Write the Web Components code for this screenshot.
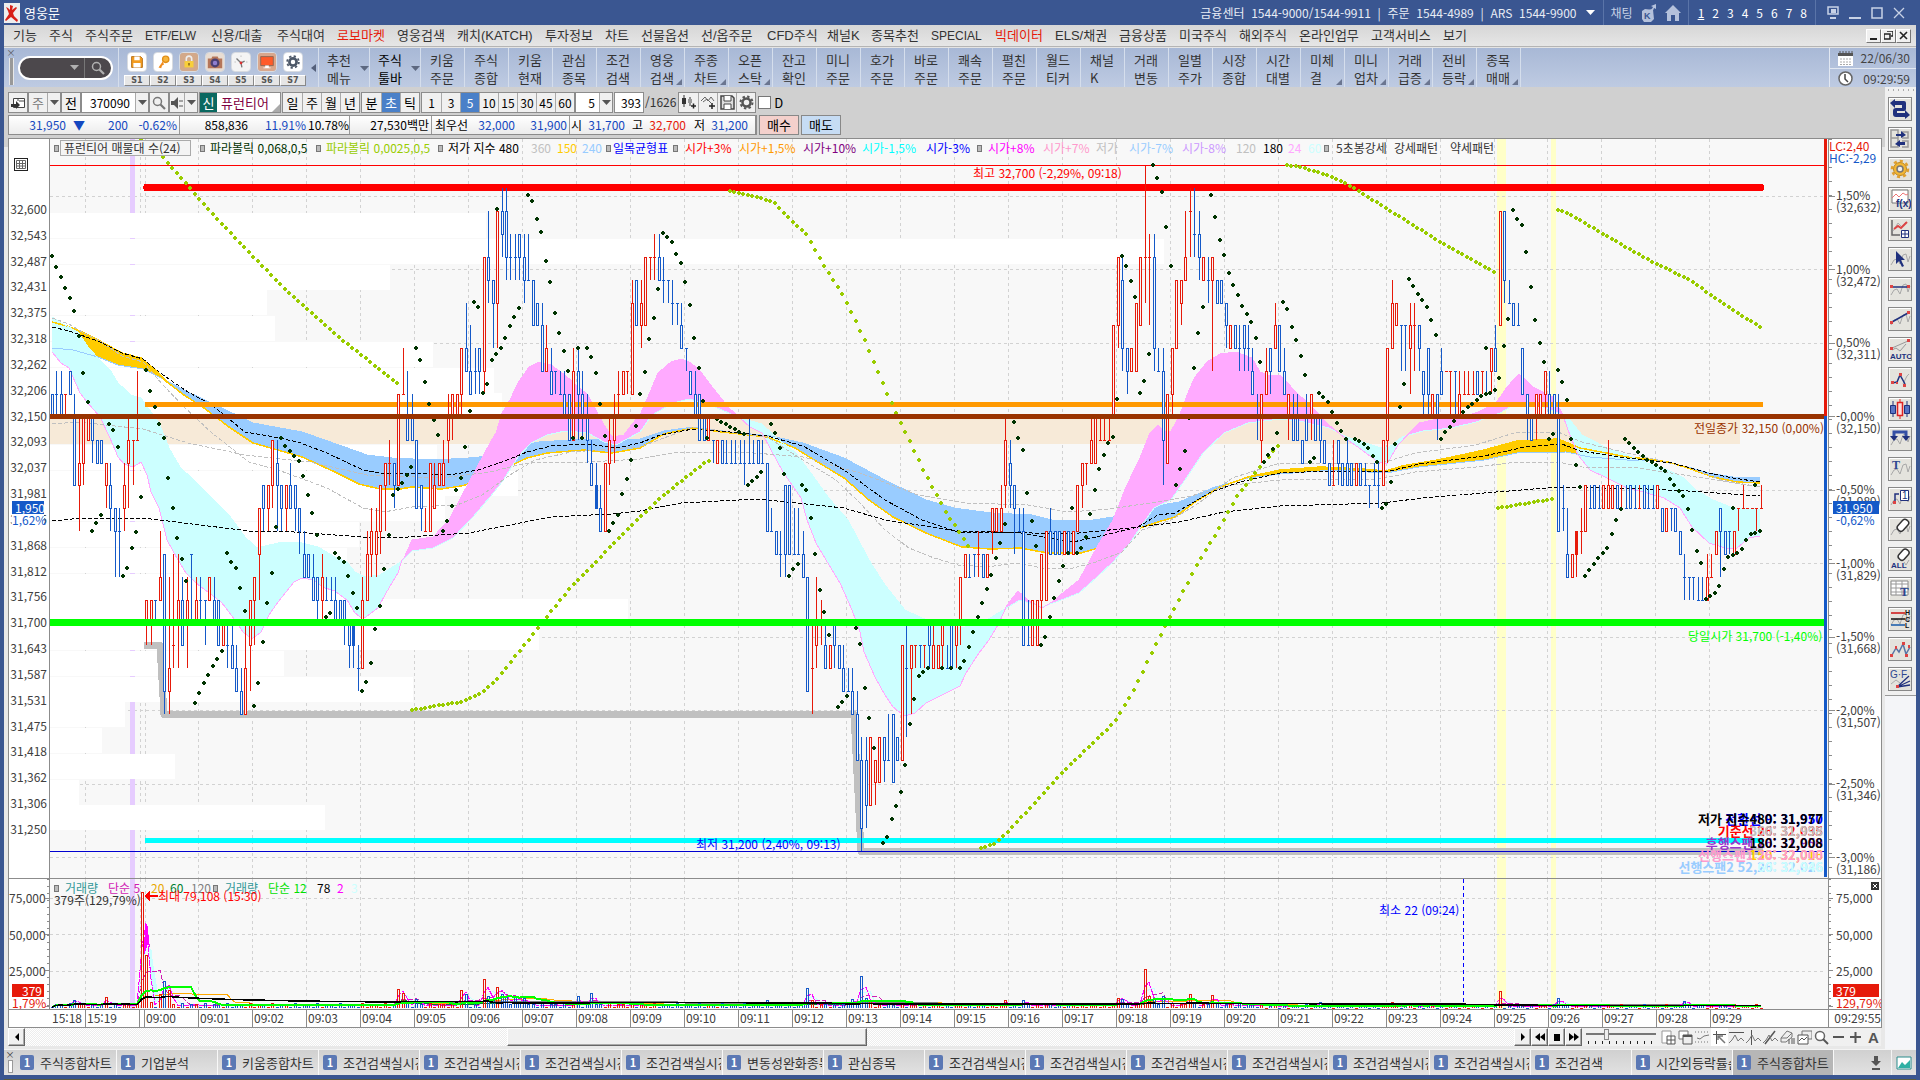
<!DOCTYPE html>
<html lang="ko">
<head>
<meta charset="utf-8">
<title>영웅문</title>
<style>
  html, body {
    margin: 0;
    height: 100%;
  }
  body {
    --frame: #3a5691;
    --up: #e61a0a;
    --down: #1459c8;
    --face: #f0f0f0;
    --edge: #8c8c8c;
    font: 13px/16px "Noto Sans CJK KR", sans-serif;
    color: #333;
    overflow: hidden;
  }
</style>
</head>
<body>
<trading-app></trading-app>

<script>
const BASE = `
  * { box-sizing: border-box; }
  :host { display: block; box-sizing: border-box; }
  button, input, select { font: inherit; color: inherit; margin: 0; padding: 0; border: 0; background: none; border-radius: 0; }
  select { appearance: none; }
  a { color: inherit; text-decoration: none; }
  svg { display: block; }
`;

class UiElement extends HTMLElement {
  constructor() {
    super();
    this.attachShadow({ mode: 'open' });
  }

  connectedCallback() {
    this.shadowRoot.innerHTML = `<style>${BASE}${this.styles()}</style>${this.render()}`;
  }

  styles() { return ''; }
  render() { return '<slot></slot>'; }
}

/* ---------- icons ---------- */

const svg = (w, h, body) => `<svg width="${w}" height="${h}" viewBox="0 0 ${w} ${h}" aria-hidden="true">${body}</svg>`;
const CARET = svg(9, 5, '<path d="M0 0h9L4.500 5z" fill="currentColor"/>');
const LENS = svg(14, 14, '<circle cx="5.500" cy="5.500" r="4" fill="none" stroke="currentColor" stroke-width="1.500"/><path d="M8.500 8.500l4.500 4.500" stroke="currentColor" stroke-width="2.200"/>');
const WAVE = '<path d="M2 17l3-5 3-1 3 5 3-9 3-1 2 8 2-6" fill="none" stroke="#a8a8a8"/>';

const RAIL_ICONS = [
  ['종목 연동', '<path d="M1 5l5-4v2h9q2 0 2 2v6q0 2-2 2H8v2h8v-3l5 5-5 4v-2H7q-3 0-3-3v-3q0-3 3-3h6V7H6v3z" fill="#20317d"/>'],
  ['화면 분할', '<path d="M2 2h7v17H2zM2 10h7M13 4h6v6h-6M13 13h6v6h-6" fill="none" stroke="#999" stroke-width="1.500"/><path d="M7 6h5V3l5 4-5 3V8H7zM16 14h-5v-2l-5 4 5 3v-2h5z" fill="#20317d"/>'],
  ['환경설정', '<circle cx="11" cy="11" r="6.500" fill="#f3b735" stroke="#b98722"/><circle cx="11" cy="11" r="8" fill="none" stroke="#e0a030" stroke-width="2.500" stroke-dasharray="3.100 3.100"/><circle cx="11" cy="11" r="3" fill="#eee" stroke="#777" stroke-width="1.500"/>'],
  ['수식관리자', '<path d="M3 2h16v13H3z" fill="#fff" stroke="#777"/><path d="M3 10l4-4 3 3 4-4 3 2 2-1" fill="none" stroke="#e77"/><text x="7" y="19" font-size="10" font-weight="bold" font-family="Liberation Sans" fill="#20317d">f(x)</text>'],
  ['지표추가', '<path d="M3 2v15h8" fill="none" stroke="#666" stroke-width="1.500"/><path d="M4 13l5-8 4 4 4-5" fill="none" stroke="#aaa"/><path d="M5 11l4-3 3 2 6-6" fill="none" stroke="#d44" stroke-width="2"/><path d="M12.500 12.500h7v7h-7zM16 12.500v7M12.500 16h7" fill="#fff" stroke="#20317d"/>'],
  ['선택', WAVE + '<path d="M7 3v13l3-3 3 6 2-1-3-6h4z" fill="#20317d"/>'],
  ['수평선', WAVE + '<path d="M2 9h18" stroke="#20317d" stroke-width="1.500"/><path d="M1 7h3v3H1zM18 7h3v3h-3z" fill="#d44"/>'],
  ['추세선', WAVE + '<path d="M3 14L19 5" stroke="#20317d" stroke-width="1.500"/><path d="M1 13h3v3H1zM18 3h3v3h-3z" fill="#d44"/>'],
  ['자동추세선', '<path d="M3 10L19 3M3 12l4-2 4 3 6-7" fill="none" stroke="#999"/><path d="M1 9h3v3H1zM18 1h3v3h-3z" fill="#d44"/><text x="1" y="21" font-size="8" font-weight="bold" font-family="Liberation Sans" fill="#20317d">AUTO</text>'],
  ['파동선', '<path d="M14 16l4-8 2-2" fill="none" stroke="#a8a8a8"/><path d="M3 15l5-1 3-7 5 9" fill="none" stroke="#20317d" stroke-width="1.500"/><path d="M2 13h3v3H2zM7 14h2v2H7zM10 5h3v3h-3zM14 16h3v3h-3z" fill="#d44"/>'],
  ['봉 표시', '<path d="M4 3v16M18 3v16" stroke="#20317d"/><path d="M1.500 7.500h5v8h-5zM15.500 7.500h5v8h-5z" fill="#5874c4" stroke="#20317d"/><path d="M11 1v20" stroke="#d22"/><path d="M8.500 4.500h5v13h-5z" fill="#fdd" stroke="#d22" stroke-width="1.500"/>'],
  ['되돌리기', WAVE + '<path d="M5 9V4h12v5" fill="none" stroke="#3550a5" stroke-width="3"/><path d="M1 8h8l-4 5zM13 8h8l-4 5z" fill="#20317d"/>'],
  ['텍스트', WAVE + '<text x="3" y="11" font-size="12" font-weight="bold" font-family="Liberation Serif" fill="#2c4790">T</text>'],
  ['번호', WAVE + '<path d="M6 15V6h4" fill="none" stroke="#20317d" stroke-width="1.500"/><path d="M11.500 2.500h8v10h-8z" fill="#fff" stroke="#20317d"/><text x="13" y="11" font-size="10" font-family="Liberation Sans" fill="#20317d">1</text><path d="M4 13h3v3H4z" fill="#d44"/>'],
  ['지우기', WAVE + '<rect x="8" y="4" width="13" height="7" rx="3" transform="rotate(-48 14 8)" fill="#fff" stroke="#333" stroke-width="1.500"/>'],
  ['모두 지우기', '<rect x="9" y="3" width="12" height="7" rx="3" transform="rotate(-48 15 7)" fill="#fff" stroke="#333" stroke-width="1.500"/><path d="M15 14l2 3 3-5" fill="none" stroke="#a8a8a8"/><text x="2" y="20" font-size="8" font-weight="bold" font-family="Liberation Sans" fill="#20317d">ALL</text>'],
  ['데이터표', '<path d="M2 3h17v14H2z" fill="#fff" stroke="#888"/><path d="M2 6h17M2 10h17M2 14h17M7 3v14M13 3v14" stroke="#999"/><text x="11" y="18" font-size="13" font-weight="bold" font-family="Liberation Serif" fill="#2c4790">T</text>'],
  ['고저종 표시', WAVE + '<path d="M2 5h14" stroke="#c11" stroke-width="1.500"/><path d="M2 11h14" stroke="#111" stroke-width="1.500"/><path d="M2 17h14" stroke="#1459a8" stroke-width="1.500"/><g font-size="7" font-weight="bold" font-family="Liberation Sans" fill="#111"><text x="16" y="7">H</text><text x="16" y="14">C</text><text x="16" y="20">L</text></g>'],
  ['지그재그', '<path d="M3 17l4-7 3 4 4-8 3 10 4-7" fill="none" stroke="#5874a4" stroke-width="1.500"/><path d="M1 16h3v3H1zM6 8h2v3H6zM13 4h3v3h-3zM16 16h3v3h-3zM19 7h2v3h-2z" fill="#d44"/>'],
  ['갠·피보나치', '<path d="M2 16l5-4 4 3" fill="none" stroke="#aaa"/><path d="M8 19L20 8M8 19l13-6M8 19l13-2" stroke="#20317d" stroke-width="1.300"/><path d="M7 17h3v3H7z" fill="#d44"/><text x="1" y="10" font-size="10" font-family="Liberation Sans" fill="#2c4790">G·F</text>']
];

const SHORTCUTS = [
  ['저장', '#fff', '<path d="M4 4h10l2 2v10H4z" fill="#f39c1f" stroke="#b36b12"/><path d="M7 4h6v4H7zM6 11h8v5H6z" fill="#fff"/>'],
  ['열쇠', '#fff', '<circle cx="13" cy="7" r="3.500" fill="#f6b53c" stroke="#e18f18" stroke-width="1.500"/><path d="M10 9l-5 7 3 1 1-3 2-1z" fill="#f08c1e"/>'],
  ['잠금', '#d3a98a', '<path d="M7 9V6.500a3 3 0 016 0V9" fill="none" stroke="#eee" stroke-width="1.800"/><rect x="5" y="9" width="10" height="7" fill="#f8cf3a"/><path d="M10 11v3" stroke="#7a5a10" stroke-width="1.500"/>'],
  ['화면캡처', '#e9ddd2', '<path d="M2 6h4l1-2h6l1 2h4v11H2z" fill="#b5765a"/><circle cx="10" cy="11" r="5" fill="#4a4072"/><circle cx="10" cy="11" r="2.500" fill="#8f7fd0"/>'],
  ['시계', '#f4f4f4', '<path d="M5 6l5 5 4-2M10 11l1 5" fill="none" stroke="#777" stroke-width="1.500"/><circle cx="10" cy="11" r="1.500" fill="#d33"/><path d="M10 3v1M3 10h1M16 10h1" stroke="#999"/>'],
  ['모니터', '#d9a78c', '<path d="M3 4h14v10H3z" fill="#ff5a28" stroke="#865"/><path d="M8 14h4v2H8zM6 16h8v1H6z" fill="#fff"/>'],
  ['설정', '#fff', '<circle cx="10" cy="10" r="4" fill="none" stroke="#4d5868" stroke-width="3"/><circle cx="10" cy="10" r="6.500" fill="none" stroke="#4d5868" stroke-width="2" stroke-dasharray="2.500 2.600"/>']
];

/* ---------- chart data ---------- */

// One token per 5-second bar: colour, then high, low, body top and body bottom.
// Levels are base 36 steps of 50 won above 31,200.
const BARS = `
bkjkj bljkk bljkj rkjkk blklk bkgjg rjehg rjgjh rjiji bjhji bihih bihih rhfhg bhegf bfcfe bfcee rhegf rjfih rigii rliii
r.... rb9ba rb9ba bbabb rebcb bd6d7 rc687 rd899 rd8ba bc9b9 rc8ba bdadd rcaba bcabb bb9bb rcbcb bcaba bb9b9 ra9a9 ba899
ba898 b9787 b8676 ra686 rb7b9 rc9cb rfbfd bgegf rgegf rifig biehg bgegf rgegf bhfgf bgegf bfdfe becdc bdcdc bdbcb bcacb
rdacb bcbbb bcbbb bcaba bbaba bb9ba ba8a9 b98a9 b9788 rc8b8 rebdb rfced rfced rgdge rhehg righh bhfhg rkgkg rmkkk bliji
bkiji bifif bgegf rfeee rhehe rhfgf rhghg righg rkhji rkikj rkjkj rmjmk bolml bnklk bmkll bmkml rqkql bsoqp bpmpo rsmso
btqsr btpsq brpqq brpqq brprq broqp brppp bpnpn bonon bolnl rnlml bmklk blkll blkkk bljkj bkiki rmili bmilk blikj bkhji
bighg bhgfg bgefe rhehe rjgih rkhji rljkk rlklk rlkll rpkok bpnpn rpmon rqnqn rqpqq rrpqq brpqp bqopp bpopp bpnoo bonoo
bomnm bmlmm blklk bljkj bkiki bjiji rjiji bihii rihih bihih bihhh bihhh bihhh bihhh bighh bjhhh bihhh bihih bihhh bhehe
bfeee beded becdd bgcgd bgdgd bfddd bfddd becdc bc7c7 ra688 rc8a9 rb9aa ba898 r9898 ba8a9 b9898 b9787 b8777 b8676 b7464
b5041 b5142 r5252 r4243 r5353 b5354 b6444 b6363 b5454 r9494 ba588 r9698 r9899 b9899 r9899 ba8a9 ra898 r9898 ra8a9 b9888
ba8a8 ra8a9 rc9ca rdcdc bdccc bdcdd recdd bdcdc rdcdc rfdfe rfefe rgefe rjfig bifhg bgdgf bfeee bf9e9 bb999 rb9b9 rb9b9
rdadb rebeb bfded beded beded reded beded reded rgege rhfhg rhghh rjhih rjhjh rjiii rjiii rjiii rnjnj rqmqn bqlpm bmkml
rmlml rolol rqnqn ruoqq rrnqq brlqm bmlll bmgli rkhkh rmjmk rpmpm rpnpo rspqp rtqss btqrr bsprq rqpqp bqopp rqlqp bpopo
bpopo bomon rnmnm bnmnm bnlmm bnlnm bnlmm bmklk bkijj rkhki rmklk bmkml romnm bnlnl bmklk rkikj bkiji bkiji bihih bkiji
rkikj bjiji bjhji bihih bhghg riggg bigih bhghg bighg bhghg rhghg bhghg bhggg bgfgg bhggg bhfgg rigig rmhmi rpmom ronon
bnlnn bnlnn roknm rolnn bnlnm bljlk bmjmk rkjkj bkikj bmklk rllll rljll bljll rljkj rlkkk rlkkk rlkkk blklk rlkll blkkk
rmkml bnlml rsnsn bsosp bpooo bonon bonnn bmkmk bkikj bjiji rkikj rkjkj rljlk bljkj bkjkj bkeje bgeff bfcdc rdcdc recde
rfdee rgege bgfff bgfgf bgfff rgfgf rifgf rgfgf bgfgf rgfff bgfff bgfgf bgfff rgfff bgfgf bgfff bgfff rgfgf bfefe rfefe
bfeff bfefe beded bdbcc bcbcc bcbcc bcbbb bcbbb rdbcb rdccc reded bfcfe beded bedee reded rfeff rgfff rffff rffff rfeff
rgfff`.trim().split(/\s+/);

const BAR_STEP = 4.497;
const barX = i => Math.round(51.8 + i * BAR_STEP);
const levelY = level => Math.round(851 - level * 22.85);

const SPAN_A = '52,352 61,363 69,368 80,393 87,402 100,417 110,438 118,457 124,464 133,467 141,462 147,475 151,492 159,508 167,540 178,560 186,573 196,583 212,595 222,603 235,620 243,632 252,639 261,632 269,615 278,602 294,582 302,578 314,580 322,587 335,591 347,600 355,613 363,619 378,608 386,593 398,573 402,560 404,558 412,540 433,537 449,520 469,482 490,443 496,433 502,413 510,400 518,383 529,367 539,362 551,365 565,375 576,385 588,395 596,410 604,425 612,437 624,435 633,423 640,415 648,397 658,373 671,362 681,359 691,363 701,372 713,388 728,407 740,418 750,427 762,433 771,450 783,472 801,498 807,520 816,543 826,560 840,583 852,610 860,632 864,652 875,677 885,695 893,707 905,716 915,713 926,703 942,695 960,686 966,673 979,653 989,640 999,623 1007,605 1018,591 1028,600 1042,608 1052,602 1064,592 1079,580 1089,562 1097,547 1113,520 1126,487 1140,458 1150,433 1158,425 1164,431 1171,431 1179,417 1189,390 1195,377 1207,362 1220,354 1236,352 1252,358 1260,372 1271,376 1280,375 1296,392 1313,408 1329,425 1345,438 1362,450 1378,462 1387,464 1398,445 1419,423 1443,418 1464,417 1478,412 1496,403 1507,387 1519,374 1533,387 1553,397 1562,413 1568,430 1578,455 1590,470 1607,478 1627,488 1647,493 1664,498 1680,508 1692,527 1709,543 1725,548 1737,548 1749,538 1760,536';
const SPAN_B = '52,317 61,323 78,332 88,347 98,358 110,370 118,383 131,395 141,398 151,412 159,423 169,448 180,467 204,490 229,515 245,537 257,548 278,543 298,542 318,547 335,557 347,562 355,572 365,577 380,575 402,561 412,551 433,548 453,538 473,517 490,497 502,482 518,457 531,443 547,435 565,431 588,433 604,442 616,445 640,432 652,415 673,403 689,399 705,403 722,410 740,418 762,424 779,440 795,452 811,473 828,497 848,520 869,560 885,585 905,610 922,618 934,623 962,628 987,620 1003,610 1020,600 1042,607 1056,602 1079,593 1097,577 1113,562 1130,543 1142,525 1154,508 1171,500 1187,477 1203,453 1224,433 1248,423 1280,419 1304,422 1329,428 1347,437 1378,447 1388,448 1402,437 1423,431 1451,428 1476,422 1500,413 1517,403 1535,404 1558,413 1570,420 1582,435 1607,448 1627,455 1647,463 1668,470 1684,478 1696,490 1713,500 1733,508 1760,510';
const LOW_150 = '52,322 67,326 82,332 98,340 122,353 141,358 155,370 167,382 184,395 204,408 229,427 253,443 278,450 302,457 335,472 359,484 380,489 400,489 412,487 441,489 461,486 486,479 506,468 527,458 547,453 584,450 612,453 640,448 664,434 693,428 722,432 767,437 795,448 811,458 844,478 869,500 893,517 926,533 962,547 991,549 1020,548 1048,553 1081,553 1109,545 1134,530 1158,522 1175,517 1195,502 1220,487 1248,477 1280,470 1321,467 1362,469 1386,471 1402,466 1443,459 1484,450 1517,441 1558,439 1580,448 1627,457 1647,459 1668,462 1688,468 1713,477 1737,482 1760,483';
const LOW_240 = '52,348 73,350 98,357 118,365 143,369 167,381 188,392 220,407 253,423 302,432 339,445 367,455 392,458 433,460 469,458 490,456 514,447 539,442 584,439 640,439 664,431 693,427 730,432 771,436 803,443 844,458 885,480 926,500 954,508 991,513 1032,515 1052,520 1093,520 1126,515 1150,507 1179,502 1215,487 1248,478 1280,474 1333,470 1386,473 1419,467 1484,460 1517,453 1566,452 1590,457 1627,460 1660,461 1688,467 1709,473 1733,477 1760,478';
const DASHED_BLACK = [
  '52,327 69,331 98,341 122,353 143,359 163,375 188,392 212,405 245,432 269,436 298,442 327,453 363,470 384,474 412,473 449,475 478,470 502,462 527,452 551,446 588,444 616,448 640,443 660,435 693,429 730,432 767,436 803,446 844,470 885,500 922,520 958,532 1020,533 1073,542 1105,535 1138,527 1158,515 1175,513 1211,492 1240,482 1280,473 1329,471 1386,472 1419,464 1484,456 1525,447 1562,444 1580,451 1627,458 1672,463 1709,473 1733,478 1760,482',
  '52,521 82,518 143,518 184,523 249,531 294,532 363,537 408,537 469,533 510,525 551,517 612,514 640,511 681,503 758,499 844,508 885,520 958,531 1069,534 1130,528 1179,522 1224,512 1280,506 1382,503 1423,498 1484,493 1558,487 1647,489 1688,491 1760,496'
];
const DASHED_GREY = [
  '52,424 78,422 143,429 188,443 245,455 310,462 367,475 441,478 490,472 518,465 539,462 588,462 640,459 677,452 742,452 803,457 860,473 918,495 967,503 1028,505 1069,512 1109,509 1150,503 1187,497 1232,485 1280,480 1378,479 1415,472 1476,467 1509,463 1558,462 1582,467 1639,468 1760,487',
  '52,318 69,324 82,332 98,340 122,356 143,362 163,385 184,407 212,433 249,462 278,470 327,488 363,508 384,512 412,507 457,505 482,495 510,475 535,460 571,452 640,447 693,427 767,437 803,460 836,480 860,503 885,530 909,548 934,558 958,565 987,567 1016,563 1048,569 1073,568 1093,563 1122,552 1142,530 1171,520 1199,503 1232,478 1280,463 1329,463 1382,463 1415,453 1476,445 1517,432 1558,432 1582,442 1627,453 1688,467 1721,480 1760,487'
];
const SAR_SLOW = [
  '141,139 164,157 168,163 186,183 208,209 245,248 286,290 335,334 398,384',
  '412,710 424,708 441,705 461,702 482,693 498,678 527,642 571,587 596,562 604,553 640,517 664,495 707,461',
  '730,191 758,197 775,203 791,220 807,235 824,265 844,297 864,338 887,393 901,423 926,475 946,512 969,547',
  '981,848 995,844 1009,831 1032,806 1062,773 1089,747 1115,722 1134,690 1152,653 1171,615 1197,565 1220,527 1236,498 1256,472 1280,443',
  '1287,165 1300,167 1327,175 1347,184 1362,193 1394,213 1439,241 1496,273',
  '1498,508 1553,499',
  '1558,210 1570,214 1607,236 1647,259 1688,279 1729,307 1760,327'
];
const SAR_FAST = [
  '52,256 65,287 73,304 78,328 83,369 87,402', '92,531 101,515', '109,424 114,431 119,451',
  '123,576 128,567 132,548 137,530 141,497', '146,370 150,389 155,407 159,423 164,438 168,475 173,508 177,536 182,559 186,581',
  '195,703 200,692 204,683 213,666 222,651', '227,553 231,561 236,568 240,585 245,611',
  '254,706 258,688 262,651 267,606 272,573 276,527', '281,438 285,445 299,461 303,474 308,495 312,511 317,535', '326,617 330,613',
  '335,553 339,558 344,562 348,574 353,593 357,608', '362,691 366,684 371,663 375,632 380,606 384,573 389,535 393,496 402,484 411,467',
  '416,348 420,358 425,382 429,402 434,420 438,435', '443,531 447,523 452,506 456,491 461,478 465,451 470,411', '474,302 479,308',
  '483,393 488,383 492,360 501,348 506,337 510,326 519,308', '497,209', '528,195 533,202 537,219 542,233 546,261 551,284 555,313 560,335 564,351 569,373',
  '573,438', '582,438', '578,348', '587,348 591,355 596,373 600,400 605,436', '609,531 618,515 622,496 627,479 631,464 636,426 640,396 645,372 649,341 654,318 658,289',
  '663,233 672,242 676,253 681,263 685,280 690,305 694,335 699,368 703,401', '707,438', '717,419 731,427 744,434', '748,485 762,472',
  '771,424 775,431 780,448 784,474', '789,576 793,570 798,564', '802,485 807,491 811,518 816,558 820,590 825,615 829,635', '838,707 847,696',
  '856,628 861,646 865,688 870,721 874,748', '883,843 888,836 892,819 897,805 901,792 906,762 910,724 915,696 919,676 928,668', '942,668', '951,668',
  '960,668 964,662 969,647 973,634 982,604 987,589 991,577 996,558 1000,545 1004,524', '1014,422 1018,437 1023,450 1027,490 1032,521 1036,546',
  '1041,645 1045,639 1054,600 1059,581 1063,566', '1068,553', '1072,508', '1077,553 1081,549 1086,537 1090,517 1095,490 1099,470 1104,455 1108,444 1113,437 1117,399',
  '1122,256 1126,264 1131,281 1135,297', '1140,393 1144,384 1149,354', '1153,165 1158,179 1162,192 1167,231 1171,266',
  '1176,485 1180,471 1184,458 1189,424 1193,376 1198,337 1202,307', '1211,195 1216,219 1220,240 1225,257 1229,273 1234,286 1243,307 1252,323 1256,338 1261,365',
  '1264,462 1274,447 1279,427', '1283,302 1288,310 1292,327 1297,342 1301,356 1306,377', '1310,462 1315,457', '1319,393 1328,402 1337,423 1346,439',
  '1355,439 1364,444 1369,448 1373,456 1378,463', '1382,508 1387,503 1391,482 1396,440 1400,407 1405,381', '1409,279 1414,287 1418,294 1427,307 1432,322 1436,335',
  '1441,439 1445,433 1450,427 1454,422 1463,412 1468,407 1477,400 1481,396 1490,393 1495,390 1499,381 1504,346 1508,319', '1486,348',
  '1513,210 1517,218 1522,225 1526,248 1531,287 1535,318 1540,343 1544,362', '1549,439 1553,434', '1558,370 1562,380 1567,400 1571,436 1576,465 1580,487',
  '1585,576 1594,564 1598,559 1607,549 1612,534 1616,521 1621,509', '1625,439 1634,448 1648,460 1666,471 1670,479 1675,486 1684,497 1688,509 1693,533 1697,551 1702,564',
  '1706,599 1715,593 1720,585 1724,569 1729,556 1738,553 1742,549 1746,541 1751,534 1760,531', '1733,508', '1755,485'
];
// right edge of each price-band bar, top to bottom
const PROFILE = [486, 1164, 390, 267, 275, 433, 494, 502, 0, 437, 518, 445, 359, 347, 355, 628, 539, 284, 413, 125, 102, 175, 79, 325];

const GRID_X = [85, 140, ...Array.from({ length: 30 }, (_, i) => Math.round(144.5 + i * 53.96))];
const parse = points => points.split(' ').map(p => p.split(',').map(Number));

function yAt(points, x) {
  for (let i = 1; i < points.length; i++) {
    const [x0, y0] = points[i - 1];
    const [x1, y1] = points[i];
    if (x <= x1) return y0 + (y1 - y0) * (x - x0) / (x1 - x0);
  }
  return points[points.length - 1][1];
}

// Splits the area between two lines wherever they cross.
function cloud(a, b, above, below) {
  const pa = parse(a), pb = parse(b);
  let out = '', run = [], sign = null;
  const flush = () => {
    if (run.length > 1) {
      const top = run.map(r => `${r[0]},${r[1].toFixed(1)}`).join(' ');
      const bottom = run.slice().reverse().map(r => `${r[0]},${r[2].toFixed(1)}`).join(' ');
      out += `<polygon points="${top} ${bottom}" fill="${sign ? above : below}"/>`;
    }
  };
  for (let x = 52; x <= 1760; x++) {
    const ya = yAt(pa, x), yb = yAt(pb, x), s = ya < yb;
    if (sign !== null && s !== sign) {
      run.push([x, ya, yb]);
      flush();
      run = [];
    }
    sign = s;
    run.push([x, ya, yb]);
  }
  flush();
  return out;
}

function dots(runs, color) {
  let d = '';
  for (const run of runs) {
    const pts = parse(run);
    const end = pts[pts.length - 1][0];
    for (let x = pts[0][0]; x < end + 2; x += BAR_STEP) {
      d += `M${Math.round(x) - 1} ${Math.round(yAt(pts, x)) - 2}h2v1h1v2h-1v1h-2v-1h-1v-2h1z`;
    }
  }
  return `<path d="${d}" fill="${color}"/>`;
}

const line = (points, color, extra = '') => `<polyline points="${points}" fill="none" stroke="${color}" ${extra}/>`;
const rule = (x1, x2, y, color, w) => `<path d="M${x1} ${y}H${x2}" stroke="${color}" stroke-width="${w}"/>`;
const grid = (ys, top, bottom) => {
  let d = '';
  for (const x of GRID_X) d += `M${x}.5 ${top}V${bottom}`;
  for (const y of ys) d += `M50 ${y}.5H1825`;
  return `<path d="${d}" stroke="#d2d2d2" stroke-dasharray="3 3" fill="none"/>`;
};

/* ---------- components ---------- */

class AppTitlebar extends UiElement {
  styles() {
    return `
      :host { display: flex; align-items: center; height: 25px; background: var(--frame); color: #fff; font-size: 12px; }
      .name { flex: 1; margin-left: 4px; font-size: 13px; }
      .sep { width: 1px; height: 25px; background: #5a74a8; }
      .phone { margin-right: 9px; color: #e8ecf5; white-space: pre; }
      button { display: flex; }
      .list { margin-right: 8px; }
      nav { display: flex; gap: 8px; padding: 0 8px 0 9px; }
      nav a:first-child { text-decoration: underline; }
      .tools { display: flex; gap: 8px; padding: 0 7px; align-items: center; color: #c8d2e6; }
      .win { display: flex; gap: 10px; padding: 0 11px; align-items: center; }
    `;
  }
  render() {
    return `
      ${svg(16, 20, '<path d="M0 0h16v20H0z" fill="#eee"/><path d="M6 2l3 1-1 4 4-3 1 1-4 5 1 3 4 4-1 2-6-5-5 4-1-1 4-6-1-3-2-4 2 1 2 2z" fill="#d82018"/>')}
      <span class="name">영웅문</span>
      <span class="phone">금융센터  1544-9000/1544-9911  |  주문  1544-4989  |  ARS  1544-9900</span>
      <button class="list" aria-label="전화번호 목록">${CARET}</button>
      <span class="sep"></span>
      <div class="tools"><span>채팅</span>
        ${svg(16, 18, '<path d="M1 7l3-2 8 1 1 9-3 3H3l-2-3z" fill="#b4c1dc"/><path d="M7 6q4 0 5-3l-2-1 5-2v5l-2-1q-1 4-4 4z" fill="#b4c1dc"/><text x="3" y="15" font-size="9" font-weight="bold" font-family="Liberation Sans" fill="#3a5691">K</text>')}
        ${svg(16, 16, '<path d="M8 0l8 8h-2v8h-4v-6H6v6H2V8H0z" fill="#b4c1dc"/>')}
      </div>
      <span class="sep"></span>
      <nav>${[1, 2, 3, 4, 5, 6, 7, 8].map(n => `<a href="#v${n}">${n}</a>`).join('')}</nav>
      <span class="sep"></span>
      <div class="win">
        <button aria-label="모니터">${svg(12, 13, '<path d="M1 1h10v7H1z" fill="none" stroke="#c8d2e6" stroke-width="1.500"/><path d="M4 3h5v4H4zM3 11h6v2H3z" fill="#c8d2e6"/>')}</button>
        <button aria-label="최소화">${svg(12, 12, '<path d="M0 10h12v2H0z" fill="#c8d2e6"/>')}</button>
        <button aria-label="최대화">${svg(12, 12, '<path d="M1 1h10v10H1z" fill="none" stroke="#c8d2e6" stroke-width="1.500"/>')}</button>
        <button aria-label="닫기">${svg(12, 12, '<path d="M1 1l10 10M11 1L1 11" stroke="#c8d2e6" stroke-width="1.300"/>')}</button>
      </div>`;
  }
}

const MENU = [
  ['기능', 36], ['주식', 36], ['주식주문', 60], ['ETF/ELW', 66], ['신용/대출', 66], ['주식대여', 60], ['로보마켓', 60, 1], ['영웅검색', 60],
  ['캐치(KATCH)', 88], ['투자정보', 60], ['차트', 36], ['선물옵션', 60], ['선/옵주문', 66], ['CFD주식', 60], ['채널K', 44], ['종목추천', 60],
  ['SPECIAL', 64], ['빅데이터', 60, 1], ['ELS/채권', 64], ['금융상품', 60], ['미국주식', 60], ['해외주식', 60], ['온라인업무', 72], ['고객서비스', 72], ['보기', 36]
];

class MenuBar extends UiElement {
  styles() {
    return `
      :host { display: flex; align-items: center; height: 22px; padding-left: 9px; background: linear-gradient(#d6d6d6, #e6e6e6); border-bottom: 1px solid #b4b4b4; font-family: "Liberation Sans", "Noto Sans CJK KR", sans-serif; }
      a { white-space: nowrap; }
      .latin { font-size: 12px; }
      .hot { color: var(--up); }
      .win { display: flex; margin-left: auto; padding-right: 5px; }
      button { width: 15px; height: 14px; display: grid; place-items: center; background: var(--face); border: 1px solid; border-color: #fff #777 #777 #fff; }
    `;
  }
  render() {
    return MENU.map(([t, w, hot]) => `<a href="#" class="${hot ? 'hot' : ''} ${/^[A-Z]+(\/[A-Z]+)?$/.test(t) ? 'latin' : ''}" style="flex:0 0 ${w}px">${t}</a>`).join('') + `
      <div class="win">
        <button aria-label="창 최소화">${svg(9, 9, '<path d="M1 7h7v2H1z" fill="#222"/>')}</button>
        <button aria-label="창 복원">${svg(9, 9, '<path d="M3 0h6v5H7M0 3h6v5H0z" fill="none" stroke="#222" stroke-width="1.500"/>')}</button>
        <button aria-label="창 닫기">${svg(9, 9, '<path d="M1 1l7 7M8 1L1 8" stroke="#222" stroke-width="1.600"/>')}</button>
      </div>`;
  }
}

const QUICK = ['키움 주문', '주식 종합', '키움 현재', '관심 종목', '조건 검색', '영웅 검색*', '주종 차트*', '오픈 스탁*', '잔고 확인', '미니 주문', '호가 주문', '바로 주문', '쾌속 주문',
  '펼친 주문', '월드 티커', '채널 K', '거래 변동', '일별 주가', '시장 종합', '시간 대별', '미체 결*', '미니 업차*', '거래 급증*', '전비 등락*', '종목 매매*'];

class QuickToolbar extends UiElement {
  styles() {
    return `
      :host { display: flex; height: 40px; background: linear-gradient(#a8b8d6, #becbe2); border-top: 1px solid #e4e4e4; }
      .grip { width: 14px; font-size: 9px; line-height: 9px; color: #555; display: flex; flex-direction: column; align-items: center; }
      .grip i { width: 5px; flex: 1; margin: 1px 0 2px; border: 1px solid #e8e8e8; border-width: 0 1px; background: #999; }
      .search { display: flex; align-self: center; width: 95px; height: 24px; margin-right: 5px; border: 2px solid #fff; border-radius: 12px; background: #4c484c; color: #b0b0b0; overflow: hidden; }
      .search label { flex: 1; display: flex; align-items: center; justify-content: flex-end; padding-right: 5px; position: relative; }
      .search select { position: absolute; inset: 0; width: 100%; opacity: 0; }
      .search button { width: 27px; border-left: 1px solid #777; display: grid; place-items: center; }
      .short { display: flex; padding: 2px 3px 0 5px; border-left: 1px solid #d5deec; }
      .short button { width: 26px; text-align: center; font: bold 8px/9px "DejaVu Sans", sans-serif; color: #555; }
      .short svg { margin: 0 auto 3px; border: 1px solid #d8dbe0; border-radius: 4px; }
      .short span { display: block; background: #e6e6e6; border: 1px solid; border-color: #fff #888 #888 #fff; }
      .back { width: 9px; display: grid; place-items: center; color: #54607a; }
      .pair { white-space: pre; line-height: 18px; text-align: left; border-left: 1px solid #d5deec; padding: 2px 0 0 9px; flex: 0 0 44px; position: relative; }
      .wide { flex-basis: 51px; display: flex; align-items: center; gap: 9px; padding-left: 8px; }
      .wide svg { color: #5d6880; }
      .dark { color: #000; }
      .pair i { position: absolute; right: 2px; bottom: 2px; border: 3px solid; border-color: transparent #6b7690 #6b7690 transparent; }
      .rest { flex: 1; border-left: 1px solid #d5deec; }
      .clock { width: 87px; border-left: 1px solid #e2e8f2; color: #444; font-size: 12px; }
      .clock div { display: flex; align-items: center; justify-content: space-between; height: 20px; padding: 0 6px 0 8px; }
      .clock div + div { border-top: 1px solid #e2e8f2; }
    `;
  }
  render() {
    return `
      <div class="grip">×<i></i></div>
      <div class="search"><label aria-label="화면 검색"><select><option></option></select>${CARET}</label><button aria-label="검색">${LENS}</button></div>
      <div class="short">${SHORTCUTS.map(([name, bg, body], i) => `<button aria-label="${name}">${svg(20, 20, `<path d="M0 0h20v20H0z" fill="${bg}"/>${body}`)}<span>S${i + 1}</span></button>`).join('')}</div>
      <button class="back" aria-label="이전">${svg(5, 8, '<path d="M5 0v8L0 4z" fill="currentColor"/>')}</button>
      <button class="pair wide">추천\n메뉴${CARET}</button>
      <button class="pair wide dark">주식\n툴바${CARET}</button>
      ${QUICK.map(t => `<button class="pair">${t.replace('*', '').replace(' ', '\n')}${t.endsWith('*') ? '<i></i>' : ''}</button>`).join('')}
      <div class="rest"></div>
      <div class="clock">
        <div>${svg(15, 15, '<path d="M0 3h15v12H0z" fill="#fff"/><path d="M0 2h15v3H0z" fill="#555"/><path d="M2 0v3M5 0v3M8 0v3M11 0v3M14 0v3" stroke="#555"/><path d="M2 8h11M2 11h11M2 13.500h11" stroke="#aaa" stroke-dasharray="2 1"/>')}<time>22/06/30</time></div>
        <div>${svg(15, 15, '<circle cx="7.500" cy="7.500" r="6.500" fill="#fff" stroke="#666" stroke-width="1.500"/><path d="M7 3v5l3 3" fill="none" stroke="#444" stroke-width="1.500"/>')}<time>09:29:59</time></div>
      </div>`;
  }
}

class ChartToolbar extends UiElement {
  styles() {
    return `
      :host { display: flex; padding: 5px 4px 0; height: 26px; color: #000; }
      .group { display: flex; height: 21px; border: 1px solid var(--edge); background: var(--face); }
      .group > * { width: 18px; display: grid; place-items: center; text-align: center; }
      .group > * + * { border-left: 1px solid #aaa; }
      .group .drop { width: 13px; color: #555; }
      .group.set > *, .group.wide > * { width: 19px; }
      .gap { margin-left: 1px; }
      .num, .code, .total { font-size: 12px; }
      .group .on { background: #4a80c8; color: #fff; }
      .group .code { width: 53px; background: #fff; text-align: left; padding-left: 3px; }
      .stock { width: 82px; margin-left: 1px; display: flex; align-items: center; gap: 4px; background: #fff; color: #800040; position: relative; white-space: nowrap; }
      .group.stock b { display: block; background: #0a6860; color: #fff; font-weight: normal; width: 17px; height: 19px; line-height: 19px; }
      .group.stock i { position: absolute; right: 0; bottom: 0; width: 0; border: 4px solid; border-color: transparent #aaa #aaa transparent; }
      .total { line-height: 20px; color: #333; padding: 0 2px 0 1px; }
      label { display: flex; align-items: center; gap: 3px; height: 21px; padding-left: 2px; }
      input[type=checkbox] { appearance: none; width: 13px; height: 13px; background: #fff; border: 1px solid #777; }
    `;
  }
  render() {
    const set = (items, on) => `<div class="group set gap ${/\d/.test(items[0]) ? 'num' : ''}">${items.map(t => `<button class="${t === on ? 'on' : ''}">${t}</button>`).join('')}</div>`;
    return `
      <div class="group"><button aria-label="창 이동">${svg(14, 14, '<path d="M2.500 2.500h11v9h-11zM7 5V2M8 5h5" fill="#fff" stroke="#444"/><path d="M0 8h5V5l4 4-4 4v-2H0z" fill="#333"/>')}</button></div>
      <div class="group"><button style="color:#777">주</button><button class="drop" aria-label="주 목록">${CARET}</button></div>
      <div class="group"><button>전</button></div>
      <div class="group"><input class="code" aria-label="종목코드" value="370090"><button class="drop" aria-label="종목 목록">${CARET}</button></div>
      <div class="group"><button aria-label="종목 검색" style="color:#777">${LENS}</button></div>
      <div class="group"><button aria-label="음성" style="width:14px">${svg(12, 12, '<path d="M0 4h3l4-4v12L3 8H0z" fill="#555"/><path d="M9 3v2M9 8v2M11 3v2M11 8v2" stroke="#555"/>')}</button><button class="drop" aria-label="음성 목록">${CARET}</button></div>
      <div class="group stock"><b>신</b>퓨런티어<i></i></div>
      ${set(['일', '주', '월', '년'])}
      ${set(['분', '초', '틱'], '초')}
      ${set(['1', '3', '5', '10', '15', '30', '45', '60'], '5')}
      <div class="group num"><select aria-label="주기" style="width:23px;background:#fff;padding-left:8px"><option>5</option></select><span class="drop">${CARET}</span></div>
      <div class="group gap num"><input aria-label="봉 개수" value="393" style="width:28px;background:#fff;padding-left:4px"></div>
      <span class="total">/1626</span>
      <div class="group wide">
        <button aria-label="봉 추가">${svg(15, 15, '<path d="M3 0v12M9 2v9" stroke="#333"/><path d="M1 3h4v6H1z" fill="#333"/><path d="M7 4h4v4H7z" fill="#999"/><path d="M10 11h5M12.500 8.500v5" stroke="#222" stroke-width="1.500"/>')}</button>
        <button aria-label="지표 추가">${svg(15, 15, '<path d="M0 6l4-4 3 4 3-4 3 4M2 7l4-3 4 4" fill="none" stroke="#666"/><path d="M8 11h6M11 8v6" stroke="#222" stroke-width="1.500"/>')}</button>
        <button aria-label="저장">${svg(15, 15, '<path d="M1 1h11l2 2v11H1z" fill="#ddd" stroke="#444" stroke-width="1.500"/><path d="M4 1v5h7V1M4 14V9h7v5" fill="#fff" stroke="#444"/>')}</button>
        <button aria-label="설정">${svg(15, 15, '<circle cx="7.500" cy="7.500" r="4" fill="none" stroke="#555" stroke-width="2.500"/><circle cx="7.500" cy="7.500" r="6" fill="none" stroke="#555" stroke-width="2" stroke-dasharray="2.400 2.300"/>')}</button>
      </div>
      <label><input type="checkbox">D</label>`;
  }
}

// [text, colour, cell width, divider after]
const QUOTE = [
  ['31,950', 'b', 59], ['▼', 'b', 19], ['200', 'b', 43], ['-0.62%', 'b', 50, 1], ['858,836', '', 70], ['11.91%', 'b', 58], ['10.78%', '', 42, 1],
  ['27,530백만', '', 82, 1], ['최우선', '', 38], ['32,000', 'b', 47], ['31,900', 'b', 53, 1], ['시', '', 14], ['31,700', 'b', 43], ['고', '', 18], ['32,700', 'r', 43], ['저', '', 19], ['31,200', 'b', 43]
];

class QuoteStrip extends UiElement {
  styles() {
    return `
      :host { display: flex; gap: 2px; height: 25px; padding: 2px 4px 3px; color: #000; }
      .cells { display: flex; border: 1px solid var(--edge); border-width: 1px 2px 1px 1px; background: linear-gradient(#fff, #ececec); font-size: 12px; line-height: 18px; padding-right: 5px; }
      .cells span { text-align: right; padding-right: 2px; white-space: nowrap; }
      .line { border-right: 1px solid #999; }
      .b { color: #1448c0; } .r { color: var(--up); }
      button { width: 40px; border: 1px solid #888; background: #f4d0cc; line-height: 18px; }
      button + button { background: #c6dcf4; }
    `;
  }
  render() {
    return `<div class="cells">${QUOTE.map(([t, c, w, div]) => `<span class="${c} ${div ? 'line' : ''}" style="width:${w}px">${t}</span>`).join('')}</div><button>매수</button><button>매도</button>`;
  }
}

const MARK = '';
const PRICE_LEGEND = [
  [MARK, '', 6], ['퓨런티어 매물대 수(24)', 'box', 131], [MARK, 'gap', 19], ['파라볼릭 0,068,0,5', '#003300', 106], [MARK, '', 10],
  ['파라볼릭 0,0025,0,5', '#99cc00', 112], [MARK, '', 10], ['저가 지수 480', '#000', 83], ['360', '#c0c0c0', 26], ['150', '#ffcc00', 25], ['240', '#99ccff', 24],
  [MARK, '', 7], ['일목균형표', '#0000ff', 60], [MARK, '', 12], ['시가+3%', '#ff0000', 54], ['시가+1,5%', '#ff9900', 64], ['시가+10%', '#800080', 59], ['시가-1,5%', '#00ffff', 64],
  ['시가-3%', '#0000ff', 51], [MARK, '', 11], ['시가+8%', '#ff00ff', 55], ['시가+7%', '#ff99cc', 53], ['저가', '#c0c0c0', 33], ['시가-7%', '#99ccff', 53], ['시가-8%', '#cc99ff', 54],
  ['120', '#c0c0c0', 27], ['180', '#000', 25], ['24', '#ffa8ff', 20], ['60', '#ccffff', 16], [MARK, '', 12], ['5초봉강세', '#333', 58], ['강세패턴', '#333', 56], ['약세패턴', '#333', 50]
];
const VOLUME_LEGEND = [
  [MARK, '', 11], ['거래량', '#339999', 43], ['단순 5', '#d01cb4', 43], ['20', '#e8a800', 19], ['60', '#008030', 21], ['120', '#808080', 22],
  [MARK, '', 12], ['거래량', '#339999', 43], ['단순 12', '#00e000', 49], ['78', '#000', 20], ['2', '#ff00ff', 14], ['3', '#ccffff', 8]
];

class ChartLegend extends UiElement {
  styles() {
    return `
      :host { display: flex; align-items: center; height: 16px; position: absolute; left: 4px; top: 1px; white-space: nowrap; font-size: 12px; }
      span { flex: none; }
      i { flex: none; width: 5px; height: 7px; border: 1px solid #777; background: #bbb; }
      i.gap { margin-left: 9px; }
      .boxed { border: 1px solid #aaa; background: #f4f4f4; line-height: 14px; padding: 0 3px; color: #333; }
    `;
  }
  render() {
    const items = this.getAttribute('kind') === 'volume' ? VOLUME_LEGEND : PRICE_LEGEND;
    return items.map(([t, c, w]) => {
      if (t === MARK) return `<i class="${c}" style="margin-right:${w - (c ? 14 : 5)}px"></i>`;
      return c === 'box' ? `<span class="boxed" style="width:${w}px">${t}</span>` : `<span style="width:${w}px;color:${c}">${t}</span>`;
    }).join('');
  }
}

const PLOT_STYLES = `
  :host { display: block; position: relative; overflow: hidden; background: #f8f8f8; font-size: 12px; }
  .plot { position: absolute; inset: 0; width: 100%; height: 100%; }
  .note { position: absolute; white-space: nowrap; transform: translateY(-50%); }
`;

class PricePlot extends UiElement {
  styles() {
    return `${PLOT_STYLES}
      .values { position: absolute; right: 5px; bottom: 5px; font-size: 13px; font-weight: bold; line-height: 12px; text-align: right; white-space: nowrap; }
      .values div { display: grid; }
      .values span { grid-area: 1 / 1; }
    `;
  }
  candles() {
    const paths = { r: '', b: '' };
    BARS.forEach((bar, i) => {
      if (bar[1] === '.') return;
      const [hi, lo, top, bottom] = [...bar.slice(1)].map(c => levelY(parseInt(c, 36)));
      const x = barX(i);
      paths[bar[0]] += `M${x}.5 ${hi}V${top}M${x}.5 ${bottom}V${lo}`;
      paths[bar[0]] += top === bottom ? `M${x - 1} ${top}.5h3` : `M${x - 1}.5 ${top}.5h2V${bottom}.5h-2z`;
    });
    return `<path d="${paths.b}" stroke="#1459c8" fill="#f8f8f8"/><path d="${paths.r}" stroke="#e61a0a" fill="#f8f8f8"/>`;
  }
  profile() {
    return PROFILE.map((x, i) => {
      const y = Math.round(213 + i * 25.75);
      return `<path d="M50 ${y}H${x || 1740}v25H50z" fill="${x ? '#fff' : '#f7ead8'}"/>`;
    }).join('');
  }
  render() {
    const at = (x, y) => `left:${((x - 50) / 1778 * 100).toFixed(2)}%;top:${((y - 139) / 739 * 100).toFixed(2)}%`;
    return `
      <svg class="plot" viewBox="50 139 1778 739" preserveAspectRatio="none" shape-rendering="crispEdges" role="img" aria-label="퓨런티어 5초봉 차트">
        <path d="M1497 139h9v739h-9zM1551 139h5v739h-5z" fill="#ffffc8"/>
        ${grid([196, 269, 343, 490, 563, 637, 710, 784, 857], 139, 878)}
        <path d="M130 139h5v739h-5z" fill="#e6ccff"/>
        ${this.profile()}
        ${cloud(LOW_150, LOW_240, '#ffcc00', '#99ccff')}
        ${cloud(SPAN_A, SPAN_B, 'none', '#ccffff')}
        ${line(LOW_240, '#99ccff')}${line(LOW_150, '#ffcc00', 'stroke-width="1.500"')}
        ${cloud(SPAN_A, SPAN_B, '#ffaaff', 'none')}
        ${line(SPAN_B, '#ccffff')}${line(SPAN_A, '#ffaaff')}
        ${DASHED_GREY.map(p => line(p, '#c0c0c0', 'stroke-dasharray="4 2"')).join('')}
        ${DASHED_BLACK.map(p => line(p, '#000', 'stroke-dasharray="4 2"')).join('')}
        ${line('144,645.5 160,645.5 164,714.5 854,714.5 861,851.5 1763,851.5', '#c0c0c0', 'stroke-width="7" stroke-linejoin="round"')}
        ${rule(50, 1825, 165.5, '#ff0000', 1)}
        ${rule(144, 1763, 187.5, '#ff0000', 7)}<path d="M143 186h1v3h-1zM1763 185h1v5h-1z" fill="#f00"/>
        ${rule(145, 1763, 404.5, '#ff9900', 5)}
        ${rule(145, 1763, 840.5, '#00ffff', 5)}
        ${dots(SAR_SLOW, '#99cc00')}
        ${this.candles()}
        ${dots(SAR_FAST, '#003300')}
        ${rule(50, 1825, 416.5, '#993300', 5)}
        ${rule(50, 1825, 622.5, '#00ff00', 7)}
        ${rule(50, 1825, 851.5, '#0000d0', 1)}
        <path d="M1824 139h3v277h-3z" fill="#e61a0a"/><path d="M1824 416h3v461h-3z" fill="#1459c8"/>
      </svg>
      <chart-legend kind="price"></chart-legend>
      <span class="note" style="${at(973, 173)};color:#f00">최고 32,700 (-2,29%, 09:18)</span>
      <span class="note" style="${at(696, 844)};color:#00f">최저 31,200 (2,40%, 09:13)</span>
      <span class="note" style="${at(1694, 428)};color:#930">전일종가 32,150 (0,00%)</span>
      <span class="note" style="${at(1688, 636)};color:#0f0">당일시가 31,700 (-1,40%)</span>
      <div class="values">
        <div><span style="color:#00f">전환선 9: 31,950</span><span style="color:#000">저가 지수480: 31,977</span></div>
        <div><span style="color:#f00">기준선 26: 32,035</span><span style="color:#c0c0c0">360: 31,998</span></div>
        <div><span style="color:#93c">후행스팬 26: 31,950</span><span style="color:#000">180: 32,008</span></div>
        <div><span style="color:#fc0">150: 32,016</span><span style="color:#f9c">선행스팬1 26: 32,000</span></div>
        <div><span style="color:#9cf">선행스팬2 52,26: 32,026</span><span style="color:#cff">60: 31,946</span></div>
      </div>`;
  }
}

class VolumePlot extends UiElement {
  styles() {
    return PLOT_STYLES;
  }
  heights() {
    const spikes = { 20: 116, 21: 53, 22: 6, 24: 14, 25: 27, 26: 18, 12: 11, 5: 8, 77: 19, 78: 15, 81: 9, 91: 18, 92: 14, 96: 29, 97: 12, 98: 9, 99: 21, 100: 14, 101: 12, 103: 12, 105: 10, 117: 12, 120: 15,
      159: 8, 168: 20, 169: 8, 178: 9, 180: 32, 181: 10, 182: 8, 212: 8, 216: 8, 237: 10, 238: 9, 243: 39, 244: 12, 245: 9, 247: 12, 253: 14, 258: 13, 282: 6, 298: 6, 322: 17, 335: 10, 363: 7 };
    return BARS.map((_, i) => spikes[i] || ((i * 37 + i * i * 11) % 5) + (i < 270 ? 1 : 0));
  }
  average(values, n) {
    return values.map((_, i) => {
      const part = values.slice(Math.max(0, i - n + 1), i + 1);
      return `${barX(i)},${(1008 - part.reduce((a, b) => a + b, 0) / part.length).toFixed(1)}`;
    }).join(' ');
  }
  render() {
    const at = (x, y) => `left:${((x - 50) / 1778 * 100).toFixed(2)}%;top:${((y - 879) / 130 * 100).toFixed(2)}%`;
    const values = this.heights();
    const paths = { r: '', b: '' };
    values.forEach((h, i) => { paths[BARS[i][0]] += `M${barX(i) - 1}.5 1008V${1008 - h}.5h2V1008`; });
    return `
      <svg class="plot" viewBox="50 879 1778 130" preserveAspectRatio="none" shape-rendering="crispEdges" role="img" aria-label="거래량 차트">
        <path d="M1497 879h9v130h-9zM1551 879h5v130h-5z" fill="#ffffc8"/>
        ${grid([898, 934, 971], 879, 1009)}
        <path d="M130 879h5v130h-5z" fill="#e6ccff"/>
        <path d="M148 945l3 5 8 50-6 4z" fill="#ccffff"/>
        ${line(this.average(values, 3), '#ccffff')}
        ${line(this.average(values, 5), '#d01cb4', 'stroke-dasharray="5 2"')}
        ${line(this.average(values, 20), '#ffa800')}
        ${line(this.average(values, 60), '#008030')}
        ${line(this.average(values, 120), '#808080')}
        ${line(this.average(values, 2), '#ff00ff', 'stroke-dasharray="6 1"')}
        <path d="M143 960l2-30 2-8 3 26-2-4-3 8z" fill="#f0f"/>
        <path d="${paths.r}" stroke="#e61a0a" fill="none"/><path d="${paths.b}" stroke="#1459c8" fill="none"/>
        ${line(this.average(values, 12), '#00ff00', 'stroke-width="2"')}
        ${line(this.average(values, 78), '#000', 'stroke-width="1.500"')}
        <path d="M144 896l6-5v4h8v2h-8v4z" fill="#f00"/>
        <path d="M1463.500 879v123" stroke="#00f" stroke-dasharray="4 3"/>
      </svg>
      <chart-legend kind="volume"></chart-legend>
      <span class="note" style="${at(54, 900)};color:#333">379주(129,79%)</span>
      <span class="note" style="${at(158, 896)};color:#f00">최대 79,108 (15:30)</span>
      <span class="note" style="${at(1379, 910)};color:#00f">최소 22 (09:24)</span>`;
  }
}

class ChartPanel extends UiElement {
  styles() {
    return `
      :host { display: grid; grid-template: 739fr 130fr 17px / 41px 1fr 53px; row-gap: 1px; background: #8c8c8c; border: 1px solid #8c8c8c; margin: 0 3px 0 4px; color: #404040; font-size: 12px; }
      .axis { background: #fff; position: relative; overflow: hidden; line-height: 12px; display: flex; flex-direction: column; justify-content: space-between; min-height: 0; }
      .left { border-right: 1px solid #8c8c8c; text-align: right; padding-right: 2px; }
      .right { border-left: 1px solid #8c8c8c; padding-left: 7px; white-space: nowrap; }
      .left.price { padding-top: 64px; padding-bottom: 43px; }
      .right.price { padding-top: 50px; padding-bottom: 3px; }
      .vol { padding-top: 13px; padding-bottom: 32px; }
      .left.vol { padding-right: 4px; }
      .ticks { position: absolute; top: 0; bottom: 0; width: 5px; }
      .left .ticks { right: 0; } .right .ticks { left: 0; width: 6px; }
      .ticks.major { background: repeating-linear-gradient(#8c8c8c 0 1px, transparent 1px 73px, #8c8c8c 73px 74px, transparent 74px 147px); top: 57px; bottom: 15px; }
      .ticks.minor { background: repeating-linear-gradient(#8c8c8c 0 1px, transparent 1px 14px); width: 3px; }
      .vol .ticks.minor { background: repeating-linear-gradient(#8c8c8c 0 1px, transparent 1px 7px); width: 2px; }
      .vol .ticks.major { background: repeating-linear-gradient(#8c8c8c 0 1px, transparent 1px 36px); top: 19px; bottom: 0; width: 4px; }
      .tag { position: absolute; left: 3px; right: 5px; background: #fff; }
      .right .tag { left: 4px; right: 2px; padding-left: 3px; }
      .tag b { display: block; font-weight: normal; color: #fff; background: var(--down); line-height: 13px; margin-left: -3px; padding-left: 3px; padding-right: 2px; }
      .left .tag b { margin-left: 0; }
      .tag.low { color: var(--down); top: 49%; }
      .tag.hot { color: var(--up); bottom: 0; } .tag.hot b { background: var(--up); }
      .lchc { position: absolute; left: 0; top: 1px; background: #fff; color: var(--down); } .lchc em { font-style: normal; color: var(--up); }
      .grid-icon { position: absolute; left: 5px; top: 19px; width: 14px; height: 13px; border: 1px solid #222; background: #fff; display: grid; place-items: center; }
      .close { position: absolute; right: 2px; top: 3px; width: 8px; height: 8px; background: #333; display: grid; place-items: center; }
      .times { display: grid; grid-template-columns: 35fr 54fr 5fr repeat(29, 54fr) 118fr; background: #fff; line-height: 15px; min-width: 0; }
      .times time { padding-left: 1px; border-left: 1px solid #8c8c8c; min-width: 0; }
      .times time:first-child { border: 0; padding-left: 2px; }
      .corner, .end { background: #fff; }
      .end { border-left: 1px solid #8c8c8c; line-height: 15px; text-align: right; }
    `;
  }
  render() {
    const left = ['32,600', '32,543', '32,487', '32,431', '32,375', '32,318', '32,262', '32,206', '32,150', '32,093', '32,037', '31,981', '31,925', '31,868', '31,812', '31,756', '31,700', '31,643', '31,587', '31,531', '31,475', '31,418', '31,362', '31,306', '31,250'];
    const right = ['1,50% 32,632', '1,00% 32,472', '0,50% 32,311', '-0,00% 32,150', '-0,50% 31,989', '-1,00% 31,829', '-1,50% 31,668', '-2,00% 31,507', '-2,50% 31,346', '-3,00% 31,186'];
    const vol = ['75,000', '50,000', '25,000'];
    const times = ['15:18', '15:19', '', ...Array.from({ length: 30 }, (_, i) => `09:${String(i).padStart(2, '0')}`)];
    return `
      <div class="axis left price">${left.map(t => `<div>${t}</div>`).join('')}
        <button class="grid-icon" aria-label="표 보기">${svg(10, 9, '<path d="M.5.500h9v8h-9zM0 3.500h10M3.500 0v9M6.500 0v9M0 6h10" fill="none" stroke="#666"/>')}</button>
        <div class="tag low"><b>1,950</b>1,62%</div></div>
      <price-plot></price-plot>
      <div class="axis right price"><i class="ticks minor"></i><i class="ticks major"></i>${right.map(t => `<div>${t.split(' ')[0]}<br>(${t.split(' ')[1]})</div>`).join('')}
        <div class="lchc"><em>LC:2,40</em><br>HC:-2,29</div>
        <div class="tag low"><b>31,950</b>-0,62%</div></div>
      <div class="axis left vol"><i class="ticks minor"></i><i class="ticks major"></i>${vol.map(t => `<div>${t}</div>`).join('')}<div class="tag hot"><b>379</b>1,79%</div></div>
      <volume-plot></volume-plot>
      <div class="axis right vol"><i class="ticks minor"></i><i class="ticks major"></i>${vol.map(t => `<div>${t}</div>`).join('')}
        <button class="close" aria-label="거래량 닫기">${svg(6, 6, '<path d="M1 1l4 4M5 1L1 5" stroke="#fff"/>')}</button>
        <div class="tag hot"><b>379</b>129,79%</div></div>
      <div class="corner"></div>
      <div class="times">${times.map(t => `<time>${t}</time>`).join('')}</div>
      <div class="end">09:29:55</div>`;
  }
}

class ChartScroller extends UiElement {
  styles() {
    return `
      :host { display: flex; height: 18px; margin: 0 4px; background: var(--face); }
      .btn { width: 17px; display: grid; place-items: center; background: var(--face); border: 1px solid; border-color: #fff #666 #666 #fff; box-shadow: inset -1px -1px #aaa; }
      .track { flex: 1; display: grid; grid-template-columns: 482fr 360fr 647fr; background: repeating-conic-gradient(#fff 0 25%, #ededed 0 50%) 0 0 / 2px 2px; }
      .thumb { grid-column: 2; background: var(--face); border: 1px solid; border-color: #fff #666 #666 #fff; box-shadow: inset -1px -1px #aaa; }
      .slide { width: 70px; margin: 0 4px; display: flex; flex-direction: column; }
      .slide input { appearance: none; width: 70px; height: 12px; background: linear-gradient(#777, #777) 0 5px / 100% 2px no-repeat; }
      .slide input::-webkit-slider-thumb { appearance: none; width: 5px; height: 11px; background: #eee; border: 1px solid #888; }
      .slide i { height: 3px; margin: 1px 1px 0 2px; background: repeating-linear-gradient(90deg, #222 0 1px, transparent 1px 7px); }
      .tools { display: flex; }
      .tools button { width: 17px; display: grid; place-items: center; }
      .tools .on { background: #fff; }
    `;
  }
  render() {
    const wave = '<path d="M0 13l3-3 3-5 3 6 3-3 3 3" fill="none" stroke="#777"/>';
    const tools = [
      ['새 창', '<path d="M1 1h9v12H1z" fill="#fff" stroke="#999"/><path d="M6 6h8v8H6zM10 6v8M6 10h8" fill="#fff" stroke="#555"/>'],
      ['창 복사', '<path d="M1 1h9v8H1z" fill="#fff" stroke="#777"/><path d="M5 5h9v9H5z" fill="#eee" stroke="#555"/><path d="M5 5h9v2H5z" fill="#555"/>'],
      ['구간', '<path d="M0 2h15M0 12h15" stroke="#777" stroke-dasharray="1 2"/><path d="M2 8l3 1 4-3 5-1" fill="none" stroke="#777"/>'],
      ['십자선', '<path d="M1 4.500h13M4.500 1v13" stroke="#555"/><path d="M6 6l7 7M6 10V6h5" fill="none" stroke="#777" stroke-width="1.500"/>', 'on'],
      ['수평', '<path d="M0 2.500h15" stroke="#555"/>' + wave], ['수직', '<path d="M5.500 0v15" stroke="#555"/>' + wave],
      ['추세', '<path d="M2 14L12 1" stroke="#555" stroke-width="1.500"/>' + wave],
      ['전체삭제', '<path d="M1 8l6-7 5 2v4l-6 5H1z" fill="#eee" stroke="#777"/><path d="M1 8h6l5-5" fill="none" stroke="#777"/><path d="M9 9v5M12 8v6M14 8v6" stroke="#555"/>'],
      ['겹치기', '<path d="M5 1h10v8H5z" fill="#eee" stroke="#777"/><path d="M1 5h10v9H1z" fill="#fff" stroke="#555"/><path d="M2 11l3-3 2 2 3-3" fill="none" stroke="#555"/>'],
      ['확대경', '<circle cx="6" cy="6" r="4.500" fill="#fff" stroke="#666" stroke-width="1.500"/><path d="M9 9l5 5" stroke="#555" stroke-width="2"/>'],
      ['축소', '<path d="M2 7h11" stroke="#555" stroke-width="2"/>'], ['확대', '<path d="M2 7h11M7.500 2v11" stroke="#555" stroke-width="2"/>'],
      ['자동', '<text x="3" y="13" font-size="15" font-weight="bold" font-family="Liberation Sans" fill="#555">A</text>']
    ];
    return `
      <button class="btn" aria-label="왼쪽">${svg(6, 8, '<path d="M5 0v8L1 4z"/>')}</button>
      <div class="track"><div class="thumb"></div></div>
      <button class="btn" aria-label="재생">${svg(6, 8, '<path d="M1 0v8l4-4z"/>')}</button>
      <button class="btn" aria-label="뒤로">${svg(10, 8, '<path d="M5 0v8L0 4zM10 0v8L5 4z"/>')}</button>
      <button class="btn" aria-label="정지">${svg(8, 8, '<path d="M1 1h6v7H1z"/>')}</button>
      <button class="btn" aria-label="앞으로">${svg(10, 8, '<path d="M0 0v8l5-4zM5 0v8l5-4z"/>')}</button>
      <div class="slide"><input type="range" aria-label="재생 속도" min="0" max="11" value="3"><i></i></div>
      <div class="tools">${tools.map(([n, b, on]) => `<button class="${on || ''}" aria-label="${n}">${svg(15, 15, b)}</button>`).join('')}</div>`;
  }
}

class ToolRail extends UiElement {
  styles() {
    return `
      :host { width: 31px; background: #f4f5f8; }
      .dots { height: 4px; width: 28px; margin-top: 1px; margin-bottom: -1px; background: radial-gradient(circle, #aaa 1px, transparent 1px) 0 0 / 5px 4px repeat-x; }
      .set { display: flex; flex-direction: column; align-items: center; gap: 6px; padding: 0 1px 4px 0; background: var(--face); border-bottom: 1px solid #999; }
      button { width: 24px; height: 24px; background: #e4e3dd; border: 1px solid #888; box-shadow: inset 1px 1px #fff; }
    `;
  }
  render() {
    return `<div class="set"><div class="dots"></div>${RAIL_ICONS.map(([name, body]) => `<button aria-label="${name}">${svg(22, 22, body)}</button>`).join('')}</div>`;
  }
}

class WindowTabs extends UiElement {
  styles() {
    return `
      :host { display: flex; height: 26px; background: linear-gradient(#d0d0d0, #e2e2e2); border-top: 1px solid #f4f4f4; }
      .grip { width: 12px; font-size: 9px; line-height: 9px; display: flex; flex-direction: column; align-items: center; }
      .grip i { width: 5px; flex: 1; margin: 1px 0 2px; border: 1px solid #999; background: #fff; }
      a { flex: 0 1 101px; min-width: 0; display: flex; align-items: center; gap: 6px; padding-left: 4px; border-right: 1px solid #f8f8f8; overflow: hidden; white-space: nowrap; }
      a b { flex: none; width: 14px; height: 15px; border-radius: 2px; background: #5b78b4; color: #fff; font-size: 11px; line-height: 15px; text-align: center; }
      a span { overflow: hidden; flex: 1; margin-right: 1px; }
      .on { background: #b6b6b6; }
      .more { margin-left: auto; display: flex; align-items: center; }
      .more button { width: 30px; height: 25px; display: grid; place-items: center; }
      .more button + button { border-left: 1px solid #f4f4f4; width: 25px; }
    `;
  }
  render() {
    const s = '조건검색실시간';
    const tabs = ['주식종합차트', '기업분석', '키움종합차트', s, s, s, s, '변동성완화종목', '관심종목', s, s, s, s, s, s, '조건검색', '시간외등락률순위', '주식종합차트'];
    return `<div class="grip">×<i></i></div>${tabs.map((t, i) => `<a href="#" class="${i === tabs.length - 1 ? 'on' : ''}"><b>1</b><span>${t}</span></a>`).join('')}
      <div class="more">
        <button aria-label="탭 목록">${svg(10, 14, '<path d="M3 0h4v5h3l-5 5-5-5h3zM1 12h8v2H1z" fill="#555"/>')}</button>
        <button aria-label="바탕화면">${svg(16, 14, '<path d="M1 1h14v12H1z" fill="#fff" stroke="#2a8c8c"/><path d="M2 12l4-6 3 3 5-5v8z" fill="#2fb0a4"/>')}</button>
      </div>`;
  }
}

class TradingApp extends UiElement {
  styles() {
    return `
      :host { display: flex; flex-direction: column; height: 100vh; border: solid var(--frame); border-width: 0 4px; background: #e8e8e8; }
      .body { flex: 1; min-height: 0; display: flex; }
      .work { flex: 1; min-width: 0; display: flex; flex-direction: column; background: linear-gradient(#d0d0d0 0 60px, #e8e8e8 60px); padding-bottom: 3px; }
      chart-panel { flex: 1; min-height: 0; }
      footer { height: 5px; background: var(--frame); border-bottom: 1px solid #5c5c3c; flex: none; }
      app-titlebar, menu-bar, quick-toolbar, window-tabs, chart-toolbar, quote-strip, chart-scroller { flex: none; }
    `;
  }
  render() {
    return `
      <app-titlebar></app-titlebar>
      <menu-bar></menu-bar>
      <quick-toolbar></quick-toolbar>
      <div class="body">
        <main class="work">
          <chart-toolbar></chart-toolbar>
          <quote-strip></quote-strip>
          <chart-panel></chart-panel>
          <chart-scroller></chart-scroller>
        </main>
        <tool-rail></tool-rail>
      </div>
      <window-tabs></window-tabs>
      <footer></footer>`;
  }
}

customElements.define('app-titlebar', AppTitlebar);
customElements.define('menu-bar', MenuBar);
customElements.define('quick-toolbar', QuickToolbar);
customElements.define('chart-toolbar', ChartToolbar);
customElements.define('quote-strip', QuoteStrip);
customElements.define('chart-legend', ChartLegend);
customElements.define('price-plot', PricePlot);
customElements.define('volume-plot', VolumePlot);
customElements.define('chart-panel', ChartPanel);
customElements.define('chart-scroller', ChartScroller);
customElements.define('tool-rail', ToolRail);
customElements.define('window-tabs', WindowTabs);
customElements.define('trading-app', TradingApp);
</script>
</body>
</html>
